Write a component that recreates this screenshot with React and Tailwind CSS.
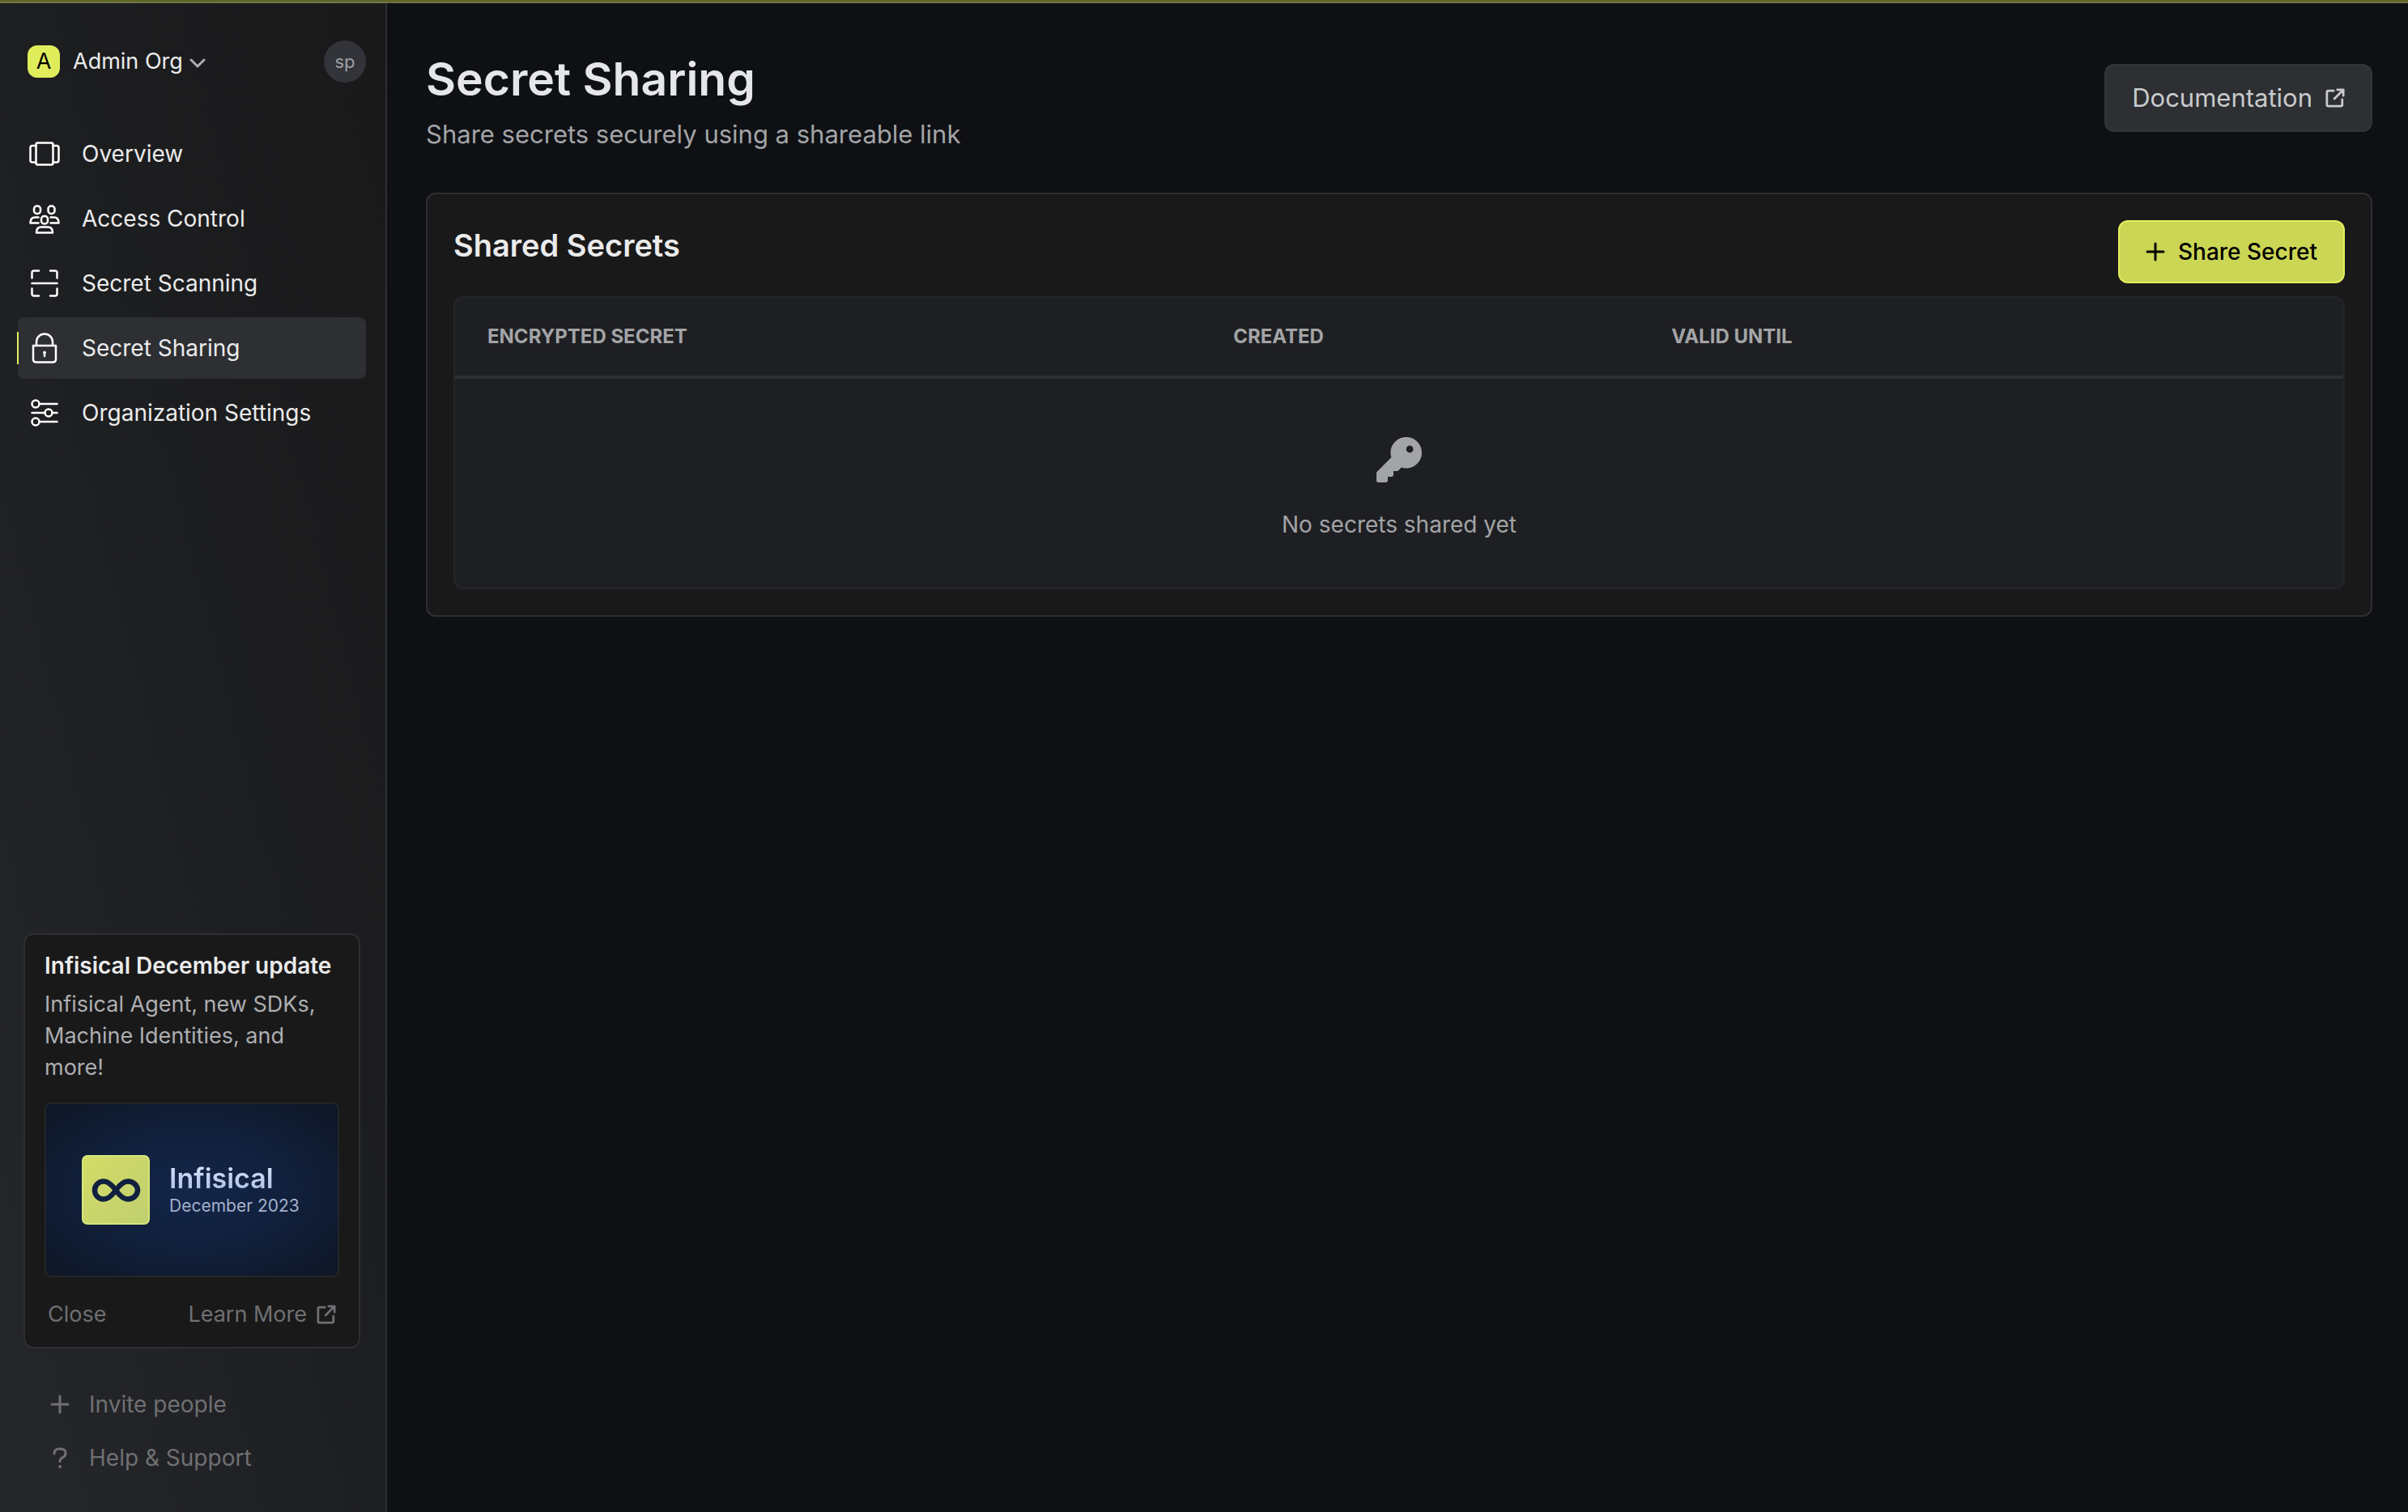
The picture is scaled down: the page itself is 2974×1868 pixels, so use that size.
import { FaKey } from "react-icons/fa6";

const stroke = {
  fill: "none",
  stroke: "currentColor",
  strokeWidth: 2.5,
  strokeLinecap: "round",
  strokeLinejoin: "round",
  "aria-hidden": true,
};

function OverviewIcon() {
  return (
    <svg viewBox="0 0 40 40" className="size-10" {...stroke}>
      <rect x="9.500" y="6.500" width="21" height="27" rx="2" />
      <path d="M9.500 10H5Q2.500 10 2.500 12.500V28Q2.500 30.500 5 30.500H9.500M30.500 10H35Q37.500 10 37.500 12.500V28Q37.500 30.500 35 30.500H30.500" />
    </svg>
  );
}

function AccessIcon() {
  return (
    <svg viewBox="0 0 40 40" className="size-10" {...stroke}>
      <rect x="7" y="4.500" width="8" height="9.500" rx="3.500" />
      <rect x="24.500" y="4.500" width="8" height="9.500" rx="3.500" />
      <rect x="16" y="17" width="8" height="9.500" rx="3.500" />
      <path d="M12.500 25.500H2.500Q2.500 18.500 8.500 18.500H12.500M27.500 18.500H31.500Q37.500 18.500 37.500 25.500H27.500" />
      <path d="M10 37.500Q10 30.500 16 30.500H24Q30 30.500 30 37.500Z" />
    </svg>
  );
}

function ScanIcon() {
  return (
    <svg viewBox="0 0 40 40" className="size-10" {...stroke}>
      <path d="M4.500 13.500V7Q4.500 4.500 7 4.500H13M27 4.500H33Q35.500 4.500 35.500 7V13.500M35.500 26.500V33Q35.500 35.500 33 35.500H27M13 35.500H7Q4.500 35.500 4.500 33V26.500M4.500 20H35.500" />
    </svg>
  );
}

function LockIcon() {
  return (
    <svg viewBox="0 0 40 40" className="size-10" {...stroke}>
      <path d="M10 17V12.500A10 10 0 0 1 30 12.500V17" />
      <path d="M6 17H34V33.500Q34 37.500 30 37.500H10Q6 37.500 6 33.500Z" />
      <circle cx="20" cy="25.500" r="1.500" fill="currentColor" strokeWidth="1" />
      <path d="M20 26V30" />
    </svg>
  );
}

function SettingsIcon() {
  return (
    <svg viewBox="0 0 40 40" className="size-10" {...stroke}>
      <circle cx="9" cy="9" r="4.500" />
      <circle cx="25" cy="20" r="4.500" />
      <circle cx="9" cy="31" r="4.500" />
      <path d="M14 9H35.500M4.500 20H20.500M29.500 20H35.500M14 31H35.500" />
    </svg>
  );
}

function ExternalIcon() {
  return (
    <svg viewBox="0 0 26 26" className="size-6" {...stroke} strokeWidth="3">
      <path d="M11 3.500H4Q2 3.500 2 5.500V22Q2 24 4 24H20.500Q22.500 24 22.500 22V15M16 2H24V10M24 2L12 14" />
    </svg>
  );
}

function PlusIcon() {
  return (
    <svg viewBox="0 0 24 24" className="size-6" {...stroke} strokeWidth="3">
      <path d="M12 2V22M2 12H22" />
    </svg>
  );
}

function QuestionIcon() {
  return (
    <svg viewBox="0 0 24 28" className="h-7 w-6" {...stroke} strokeWidth="3">
      <path d="M5 9Q5 3 11 3H13Q19 3 19 8.500Q19 12 15.500 13.700Q12 15.500 12 18.500" />
      <circle cx="12" cy="25" r="2" fill="currentColor" stroke="none" />
    </svg>
  );
}

const nav = [
  { label: "Overview", Icon: OverviewIcon },
  { label: "Access Control", Icon: AccessIcon },
  { label: "Secret Scanning", Icon: ScanIcon },
  { label: "Secret Sharing", Icon: LockIcon, active: true },
  { label: "Organization Settings", Icon: SettingsIcon },
];

function UpdateCard() {
  return (
    <section className="mr-[7px] ml-[7px] flex flex-col rounded-xl border-2 border-[#2d2f33] bg-[#19191a] px-6 pt-[18px] pb-5">
      <h2 className="text-[28px] leading-[40px] font-semibold text-[#ebebeb]">Infisical December update</h2>
      <p className="mt-2 text-[27px] leading-[39px] text-[#adaeb0]">
        Infisical Agent, new SDKs, Machine Identities, and more!
      </p>
      <div className="mt-6 flex h-[216px] items-center gap-6 rounded-lg border-2 border-[#232529] bg-[radial-gradient(ellipse_at_center,#132549_0%,#11203d_45%,#0e1625_100%)] pl-11">
        <svg viewBox="0 0 84 86" className="h-[86px] w-[84px] shrink-0" aria-hidden="true">
          <defs>
            <linearGradient id="logo" x1="0" y1="0" x2="1" y2="1">
              <stop offset="0" stopColor="#d3dc66" />
              <stop offset="1" stopColor="#c0cf70" />
            </linearGradient>
          </defs>
          <rect x="1" y="1" width="82" height="84" rx="6" fill="url(#logo)" stroke="#d5e67c" strokeWidth="2" />
          <path
            d="M42 43.500C36 35 32 32.500 27 32.500C20.500 32.500 16 37.500 16 43.500C16 49.500 20.500 54.500 27 54.500C32 54.500 36 52 42 43.500C48 35 52 32.500 57 32.500C63.500 32.500 69 37.500 69 43.500C69 49.500 63.500 54.500 57 54.500C52 54.500 48 52 42 43.500Z"
            fill="none"
            stroke="#11203f"
            strokeWidth="6.500"
          />
        </svg>
        <div className="flex flex-col">
          <span className="bg-gradient-to-b from-[#dbe5fb] to-[#a9bce2] bg-clip-text text-[34px] leading-10 font-semibold text-transparent">
            Infisical
          </span>
          <span className="text-[21px] leading-7 text-[#a3b0cb]">December 2023</span>
        </div>
      </div>
      <div className="mt-[26px] flex items-center justify-between px-1 text-[27px] leading-10 text-[#6f7073]">
        <button type="button">Close</button>
        <a href="#learn-more" className="flex items-center gap-3">
          Learn More
          <ExternalIcon />
        </a>
      </div>
    </section>
  );
}

function Sidebar() {
  return (
    <aside className="flex w-[478px] shrink-0 flex-col border-r-2 border-[#2d2f33] bg-gradient-to-tr from-[#26272b] via-[#1c1d1f] via-60% to-[#19191a] pr-6 pb-[39px] pl-[22px]">
      <div className="mt-[46px] flex items-center justify-between pl-3">
        <button type="button" className="flex items-center text-[27px] leading-10 text-[#ebebeb]">
          <span className="mr-4 flex size-10 items-center justify-center rounded-xl bg-[#e0ed5b] text-black">A</span>
          Admin Org
          <svg viewBox="0 0 20 12" className="mt-1 ml-2 h-3 w-5" {...stroke} stroke="#adaeb0" strokeWidth="3">
            <path d="M2 2L10 10L18 2" />
          </svg>
        </button>
        <button type="button" className="flex size-[52px] items-center justify-center rounded-full bg-[#323439] text-[22px] leading-8 text-[#a0a1a3]">
          sp
        </button>
      </div>
      <nav className="mt-[50px] flex flex-col gap-1">
        {nav.map(({ label, Icon, active }) => (
          <a
            key={label}
            href="#nav"
            aria-current={active ? "page" : undefined}
            className={
              active
                ? "relative flex h-[76px] items-center gap-[26px] rounded-lg bg-[#2d2f33] pl-[13px] text-[28px] text-[#ebebeb]"
                : "flex h-[76px] items-center gap-[26px] rounded-lg pl-[13px] text-[28px] text-[#ebebeb]"
            }
          >
            {active && <span className="absolute top-[18px] -left-px h-10 w-0.5 bg-[#e0ed5b]" />}
            <span className="text-white">
              <Icon />
            </span>
            {label}
          </a>
        ))}
      </nav>
      <div className="mt-auto">
        <UpdateCard />
        <div className="mt-[41px] flex flex-col gap-[10px] pl-10 text-[28px] leading-[56px] text-[#6f7073]">
          <button type="button" className="flex items-center gap-6">
            <PlusIcon />
            Invite people
          </button>
          <button type="button" className="flex items-center gap-6">
            <QuestionIcon />
            Help &amp; Support
          </button>
        </div>
      </div>
    </aside>
  );
}

function SecretsTable() {
  return (
    <div className="mt-4 overflow-hidden rounded-xl border-2 border-[#232529] bg-[#1e1f23]">
      <table className="w-full table-fixed border-collapse text-left">
        <thead>
          <tr className="h-[98px] border-b-4 border-[#2d2f33] text-2xl font-semibold text-[#a3a4a6] uppercase">
            <th scope="col" className="w-[39.5%] pl-10">Encrypted Secret</th>
            <th scope="col" className="w-[23.2%] pl-10">Created</th>
            <th scope="col" className="pl-10">Valid Until</th>
          </tr>
        </thead>
        <tbody>
          <tr>
            <td colSpan={3}>
              <div className="flex flex-col items-center pt-[72px] pb-[58px] text-[#a3a4a6]">
                <FaKey className="size-14" aria-hidden="true" />
                <p className="mt-8 text-[28px] leading-10">No secrets shared yet</p>
              </div>
            </td>
          </tr>
        </tbody>
      </table>
    </div>
  );
}

export default function App() {
  return (
    <div className="flex min-h-screen flex-col bg-[#0e1014] font-['Inter',sans-serif]">
      <div className="h-1 border-b-2 border-[#6f7643] bg-[#5f652a]" />
      <div className="flex grow">
        <Sidebar />
        <main className="min-w-0 grow px-12 pt-[58px] pr-[44px]">
          <header className="flex items-start justify-between">
            <div>
              <h1 className="text-[57px] leading-[72px] font-semibold text-[#e5e6eb]">Secret Sharing</h1>
              <p className="mt-2 text-[31px] leading-[48px] text-[#a3a4a6]">
                Share secrets securely using a shareable link
              </p>
            </div>
            <a
              href="#docs"
              className="mt-[17px] flex h-[84px] items-center gap-4 rounded-xl border-2 border-[#323439] bg-[#2d2f33] px-8 text-[31px] text-[#c9cacc]"
            >
              Documentation
              <ExternalIcon />
            </a>
          </header>
          <section className="mt-12 rounded-xl border-2 border-[#2d2f33] bg-[#19191a] p-8">
            <div className="flex items-start justify-between">
              <h2 className="text-[38px] leading-[62px] font-semibold text-[#ebebeb]">Shared Secrets</h2>
              <button
                type="button"
                className="flex h-[78px] items-center gap-4 rounded-xl border-2 border-[#e0ed5b] bg-[#ccd655] px-8 text-[28px] font-medium text-black"
              >
                <PlusIcon />
                Share Secret
              </button>
            </div>
            <SecretsTable />
          </section>
        </main>
      </div>
    </div>
  );
}
